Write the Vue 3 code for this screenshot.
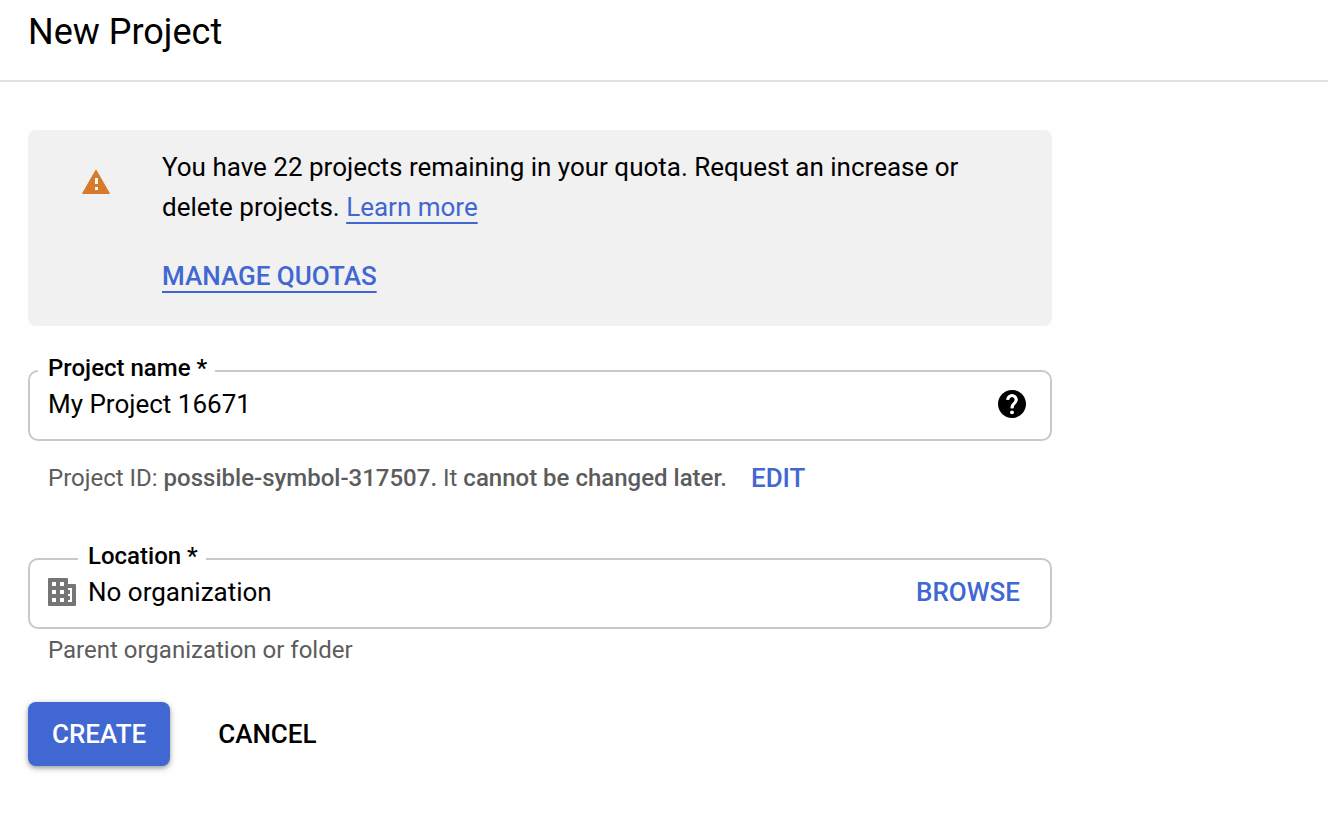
<script setup>
import { ref } from 'vue'

const projectName = ref('My Project 16671')
const location = ref('No organization')
</script>

<template>
  <div class="page">
    <header class="header">
      <h1>New Project</h1>
    </header>

    <main class="content">
      <section class="banner">
        <svg class="warning" viewBox="0 0 28 25" aria-hidden="true">
          <path fill="#d67a2c" stroke="#d67a2c" stroke-width="1" stroke-linejoin="round" d="M14 1 27.500 24.500H.5z" />
          <path fill="#fff" d="M13 9h3v6h-3zM13 18h3v3h-3z" />
        </svg>
        <div class="message">
          <p>
            <span>You have 22 projects remaining in your quota. Request an increase or delete projects.</span>
            {{ ' ' }}<a href="#">Learn more</a>
          </p>
          <p class="action"><a href="#">MANAGE QUOTAS</a></p>
        </div>
      </section>

      <form @submit.prevent>
        <fieldset class="field">
          <legend><label for="project-name">Project name *</label></legend>
          <div class="row">
            <input id="project-name" v-model="projectName" type="text" />
            <button type="button" class="help" aria-label="Help">
              <svg viewBox="2 2 20 20" aria-hidden="true">
                <path d="M12 2C6.480 2 2 6.480 2 12s4.480 10 10 10 10-4.480 10-10S17.520 2 12 2zm1 17h-2v-2h2v2zm2.070-7.750l-.9.920C13.450 12.900 13 13.500 13 15h-2v-.5c0-1.100.45-2.100 1.170-2.830l1.240-1.260c.370-.360.590-.860.590-1.410 0-1.100-.9-2-2-2s-2 .9-2 2H8c0-2.210 1.790-4 4-4s4 1.790 4 4c0 .880-.360 1.680-.930 2.250z" />
                <path fill="none" stroke="#fff" stroke-width="2" d="M9 9c0-1.700 1.300-3 3-3s3 1.300 3 3c0 2.400-3 2.800-3 6" />
                <circle cx="12" cy="18" r="1.300" fill="#fff" />
              </svg>
            </button>
          </div>
        </fieldset>

        <div class="hint id-hint">
          <span>Project ID: <b>possible-symbol-317507.</b> It <b>cannot be changed later.</b></span>
          <button type="button" class="text-button">EDIT</button>
        </div>

        <fieldset class="field with-icon">
          <legend><label for="location">Location *</label></legend>
          <div class="row">
            <svg class="building" viewBox="0 0 28 28" aria-hidden="true">
              <path fill="#757575" d="M1 0h18a1 1 0 0 1 1 1v5h7a1 1 0 0 1 1 1v20a1 1 0 0 1-1 1H1a1 1 0 0 1-1-1V1a1 1 0 0 1 1-1z" />
              <path fill="#fff" d="M4 4h4v4H4zM12 4h4v4h-4zM4 12h4v4H4zM12 12h4v4h-4zM4 20h4v4H4zM12 20h4v4h-4zM20 10h4v14h-4v-2h2v-4h-2v-2h2v-4h-2z" />
            </svg>
            <input id="location" v-model="location" type="text" />
            <button type="button" class="text-button browse">BROWSE</button>
          </div>
        </fieldset>
        <p class="hint parent-hint">Parent organization or folder</p>

        <div class="actions">
          <button type="submit" class="create">CREATE</button>
          <button type="button" class="cancel">CANCEL</button>
        </div>
      </form>
    </main>
  </div>
</template>

<style>
body {
  background: #fff;
}
</style>

<style scoped>
.page {
  font-family: Roboto, "Liberation Sans", sans-serif;
  font-size: 26px;
  color: #000;
}
.header {
  padding: 0 28px 16px;
  border-bottom: 2px solid #e0e0e0;
}
h1 {
  margin: 0;
  font-size: 36px;
  font-weight: 400;
  line-height: 64px;
}
p {
  margin: 0;
}
.content {
  max-width: 1024px;
  padding: 48px 28px;
}
.banner {
  display: flex;
  align-items: flex-start;
  padding: 17px 54px 18px;
  border-radius: 8px;
  background: #f1f1f1;
  line-height: 40px;
}
.warning {
  flex: none;
  width: 28px;
  height: 25px;
  margin: 22px 52px 0 0;
}
.action {
  margin: 29px 0 12px;
  font-weight: 500;
}
a {
  color: #4067d2;
  text-decoration: underline;
  text-decoration-thickness: 2px;
  text-underline-offset: 6px;
  text-decoration-skip-ink: none;
}
form {
  margin-top: 30px;
}
.field {
  min-width: 0;
  margin: 0;
  padding: 0 8px 17px;
  border: 2px solid #c9c9c9;
  border-radius: 10px;
}
legend {
  padding: 0 8px 6px 10px;
  font-size: 24px;
  font-weight: 500;
  line-height: 24px;
}
.with-icon legend {
  margin-left: 40px;
}
.row {
  display: flex;
  align-items: center;
  padding: 0 16px 0 10px;
}
input {
  flex: 1;
  min-width: 0;
  height: 36px;
  padding: 0;
  border: 0;
  outline: 0;
  background: none;
  font: inherit;
  color: inherit;
}
button {
  padding: 0;
  border: 0;
  background: none;
  font: inherit;
  font-weight: 500;
  color: inherit;
  cursor: pointer;
}
.help,
.help svg {
  display: block;
  width: 28px;
  height: 28px;
}
.building {
  width: 28px;
  height: 28px;
  margin-right: 12px;
}
.text-button {
  color: #4067d2;
}
.browse {
  margin-right: 6px;
}
.hint {
  padding: 0 20px;
  font-size: 24px;
  color: #5c5c5c;
}
.hint b {
  font-weight: 500;
}
.id-hint {
  display: flex;
  align-items: center;
  gap: 24px;
  margin: 19px 0 48px;
  line-height: 36px;
}
.id-hint button {
  font-size: 26px;
}
.parent-hint {
  margin-top: 3px;
  line-height: 36px;
}
.actions {
  display: flex;
  gap: 24px;
  margin-top: 34px;
}
.actions button {
  padding: 0 24px;
  border-radius: 8px;
  line-height: 64px;
}
.actions .create {
  background: #4067d2;
  color: #fff;
  box-shadow: 0 2px 4px rgba(0, 0, 0, 0.3), 0 2px 10px rgba(0, 0, 0, 0.14);
}
</style>
